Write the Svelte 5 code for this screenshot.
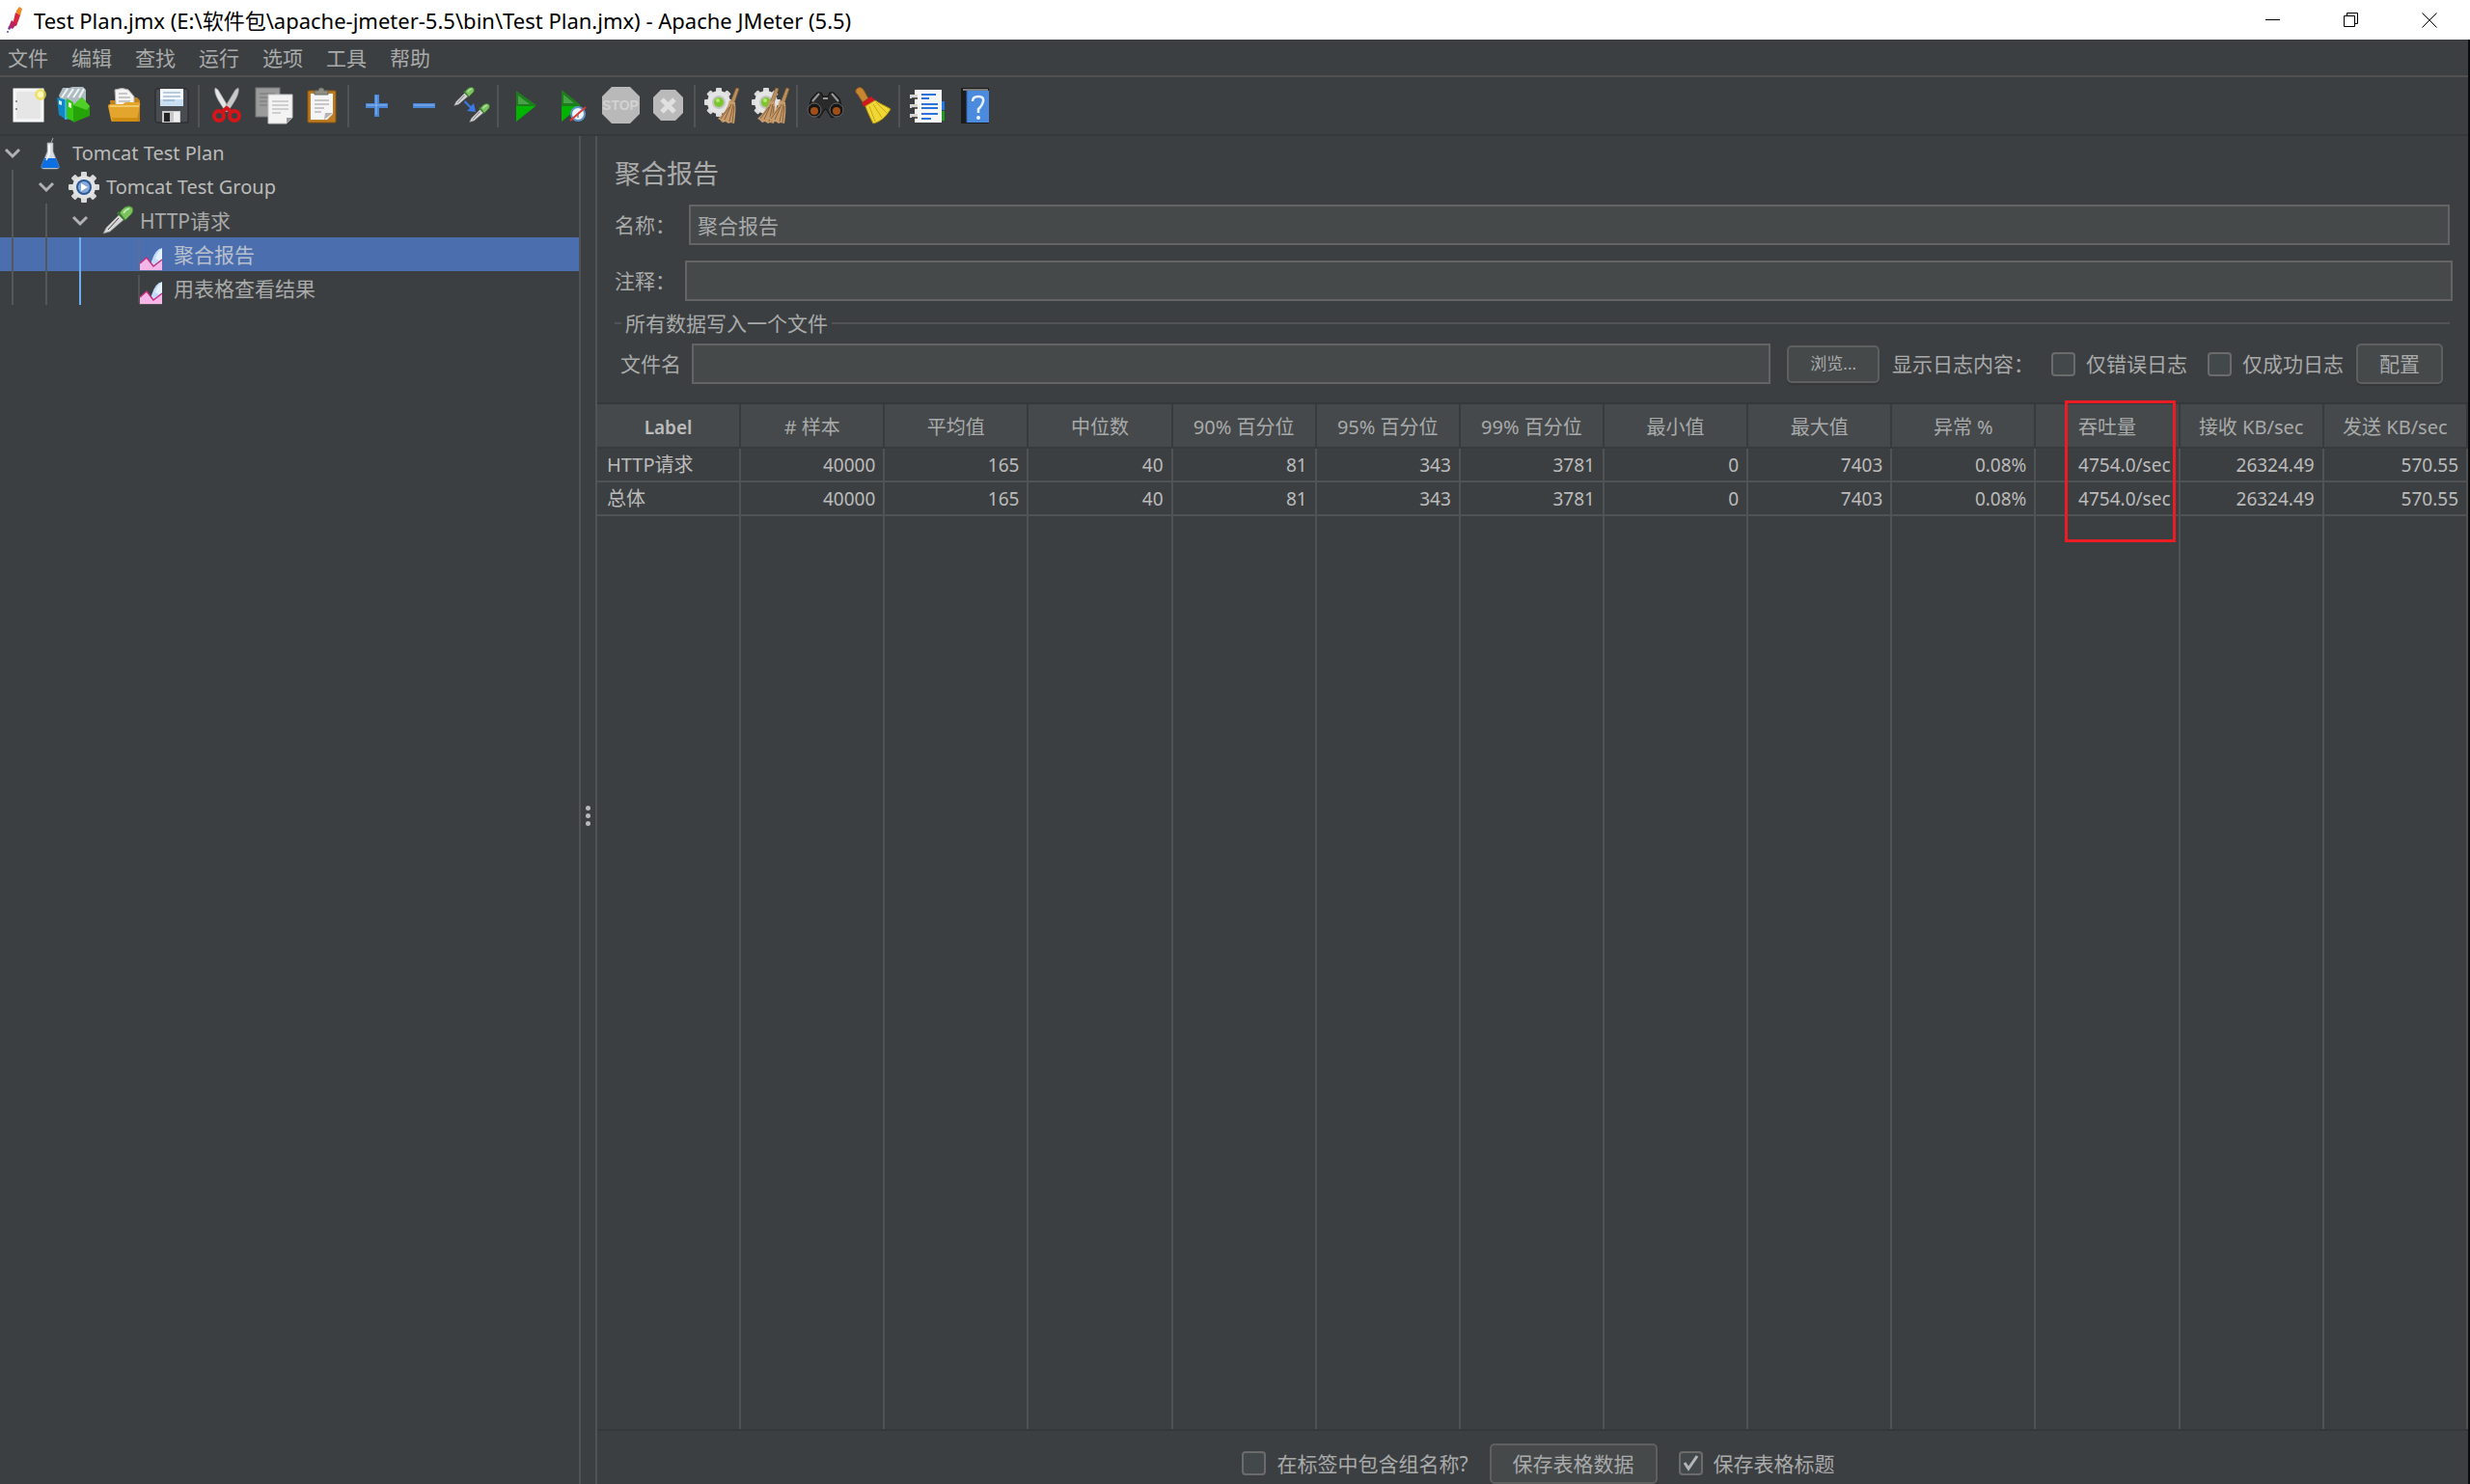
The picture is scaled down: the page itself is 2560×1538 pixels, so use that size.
<script lang="ts">
	type TreeNode = { label: string; level: number; icon: string; selected?: boolean };

	const menus = ['文件', '编辑', '查找', '运行', '选项', '工具', '帮助'];

	const toolGroups = [
		[
			{ icon: 'new', title: '新建' },
			{ icon: 'templates', title: '模板' },
			{ icon: 'open', title: '打开' },
			{ icon: 'save', title: '保存' },
		],
		[
			{ icon: 'cut', title: '剪切' },
			{ icon: 'copy', title: '复制' },
			{ icon: 'paste', title: '粘贴' },
		],
		[
			{ icon: 'plus', title: '全部展开' },
			{ icon: 'minus', title: '全部折叠' },
			{ icon: 'toggle', title: '切换' },
		],
		[
			{ icon: 'start', title: '启动' },
			{ icon: 'startNoTimers', title: '不停顿开始' },
			{ icon: 'stop', title: '停止' },
			{ icon: 'shutdown', title: '关闭' },
		],
		[
			{ icon: 'clear', title: '清除' },
			{ icon: 'clearAll', title: '清除全部' },
		],
		[
			{ icon: 'search', title: '查找' },
			{ icon: 'broom', title: '重置查找' },
		],
		[
			{ icon: 'functions', title: '函数助手' },
			{ icon: 'help', title: '帮助' },
		],
	];

	let nodes: TreeNode[] = $state([
		{ label: 'Tomcat Test Plan', level: 0, icon: 'flask' },
		{ label: 'Tomcat Test Group', level: 1, icon: 'gear' },
		{ label: 'HTTP请求', level: 2, icon: 'dropper' },
		{ label: '聚合报告', level: 3, icon: 'graph', selected: true },
		{ label: '用表格查看结果', level: 3, icon: 'graph' },
	]);

	const columns = [
		'Label', '# 样本', '平均值', '中位数', '90% 百分位', '95% 百分位', '99% 百分位',
		'最小值', '最大值', '异常 %', '吞吐量', '接收 KB/sec', '发送 KB/sec',
	];
	const markedColumn = '吞吐量';

	const stats = ['40000', '165', '40', '81', '343', '3781', '0', '7403', '0.08%', '4754.0/sec', '26324.49', '570.55'];
	const rows = [
		{ label: 'HTTP请求', values: stats },
		{ label: '总体', values: stats },
	];

	let name = $state('聚合报告');
	let comment = $state('');
	let filename = $state('');
	let errorsOnly = $state(false);
	let successOnly = $state(false);
	let includeGroup = $state(false);
	let saveHeader = $state(true);

	const teeth = [0, 45, 90, 135, 180, 225, 270, 315];

	function isLatin(text: string) {
		return /^[\x20-\x7e]+$/.test(text);
	}

	function select(index: number) {
		nodes.forEach((n, i) => (n.selected = i === index));
	}
</script>

{#snippet whisk(x: number)}
	<g transform="translate({x} 0)">
		<path d="M30 1l3 1-5 15-4-1z" fill="#b98d5c" stroke="#7a5730" stroke-width=".6" />
		<path d="M23 14l6 2c1 7 0 14-1 22l-4-1-2 1-3-2-3 1-3-3-2-1c6-5 10-11 12-19z" fill="#c69c6d" />
		<path d="M25 18l-7 16M27 18l-4 18M28 20l-2 17M23 21l-9 12" stroke="#8a6238" fill="none" />
	</g>
{/snippet}

{#snippet cog()}
	<g transform="translate(14 16)">
		{#each teeth as a}
			<rect x="-3" y="-15" width="6" height="8" rx="1" fill="#dcdcdc" transform="rotate({a})" />
		{/each}
		<circle r="12" fill="#e4e4e4" />
		<circle r="7" fill="#c4c4c4" />
		<circle r="5" fill="#7bc62d" />
		<circle cx="-1" cy="-2" r="2" fill="#b6ea72" />
	</g>
{/snippet}

{#snippet pipette(x: number, y: number, s: number)}
	<g transform="translate({x} {y}) scale({s})">
		<path d="M1 29l3-6L18 9l5 5L8 27z" fill="#d8d8d8" stroke="#888" stroke-width=".7" />
		<path d="M6 25L17 13" stroke="#444" stroke-width="1" />
		<path d="M15 8l8 8 2-2-8-8z" fill="#3d7a35" />
		<path d="M18 8c2-4 6-8 11-7 4 1 3 6 1 8l-6 6z" fill="#7cc35f" stroke="#3f7d35" />
		<path d="M22 8c1-2 3-4 6-5" stroke="#c8efb7" stroke-width="1.5" fill="none" />
	</g>
{/snippet}

{#snippet toolIcon(icon: string)}
	<svg class="tool-icon" viewBox="0 0 36 40" aria-hidden="true">
		{#if icon === 'new'}
			<rect x="1" y="2" width="31" height="34" fill="#f4f4f4" stroke="#fff" />
			<rect x="4" y="5" width="25" height="28" fill="#e6e6e6" />
			<circle cx="4" cy="15" r="1" fill="#777" /><circle cx="4" cy="23" r="1" fill="#777" />
			<circle cx="29" cy="8" r="6" fill="#f0df4e" opacity=".75" />
			<circle cx="29" cy="8" r="3" fill="#fffbc0" />
		{:else if icon === 'templates'}
			<path d="M-1 9l4-8h7l3-1h11l3 3v16H3z" fill="#aebbc1" />
			<path d="M2 11l6-9M8 11l6-9M14 11l6-9M20 11l5-9" stroke="#eef3f5" stroke-width="2" />
			<path d="M-3 11l8 2v20l-6-4z" fill="#1186c6" /><path d="M5 13l7 2v18l-7 1z" fill="#38b0e8" />
			<path d="M-1 14l3 1v4l-3-1z" fill="#d6f0fb" />
			<path d="M7 12l7 4v20l-7-4z" fill="#38c413" /><path d="M14 19l9-8 8 9v10l-17 7z" fill="#27a30a" />
			<path d="M9 16l3 1v5l-3-1z" fill="#e0ffd6" />
			<path d="M14 19l9-8 8 9-3 4z" fill="#4ed026" />
		{:else if icon === 'open'}
			<path d="M3 14h6l2-3h20l3 3v22H5z" fill="#c4831a" />
			<path d="M9 19L8 3q8-3 14 0l6 7v10z" fill="#f4f4f4" stroke="#aaa" />
			<path d="M12 7h9M12 11h12M12 15h12" stroke="#9b9b9b" />
			<path d="M1 20q0-2 2-2h13l3-2h13q3 0 2 3l-3 15q0 2-2 2H6q-2 0-2-2z" fill="#e3a52c" />
			<path d="M3 20h30" stroke="#f3c868" stroke-width="2" /><path d="M5 32h27l-1 4H6z" fill="#cf8d12" />
		{:else if icon === 'save'}
			<path d="M2 2h31l2 2v33H3l-2-2V4z" fill="#484b50" stroke="#23252a" />
			<rect x="6" y="2" width="24" height="18" fill="#f4f9ff" />
			<rect x="6" y="13" width="24" height="7" fill="#cbdff2" />
			<path d="M9 6h18M9 10h18M9 14h12" stroke="#7d9bb8" />
			<rect x="8" y="25" width="19" height="12" fill="#c8c8c8" /><rect x="10" y="27" width="6" height="9" fill="#222" />
			<rect x="20" y="26" width="6" height="10" fill="#eee" />
		{:else if icon === 'cut'}
			<path d="M6 1l3 2 12 20-4 3C12 18 4 8 6 1z" fill="#e5e5e5" stroke="#999" stroke-width=".7" />
			<path d="M30 1l-3 2-12 20 4 3C24 18 32 8 30 1z" fill="#c9c9c9" stroke="#999" stroke-width=".7" />
			<ellipse cx="10" cy="30" rx="5" ry="5" fill="none" stroke="#d4151a" stroke-width="4" />
			<ellipse cx="26" cy="30" rx="5" ry="5" fill="none" stroke="#d4151a" stroke-width="4" />
			<path d="M13 26l5-4 5 4" stroke="#d4151a" stroke-width="4" fill="none" />
		{:else if icon === 'copy'}
			<rect x="-1" y="1" width="25" height="30" fill="#9b9b9b" stroke="#777" />
			<path d="M3 7h16M3 11h16M3 15h8M3 19h8" stroke="#777" />
			<path d="M12 8h25v24l-6 6H12z" fill="#f3f3f3" stroke="#c4c4c4" />
			<path d="M16 15h17M16 19h17M16 23h17M16 27h9" stroke="#aaa" /><path d="M31 38v-6h6z" fill="#999" />
		{:else if icon === 'paste'}
			<rect x="4" y="4" width="29" height="33" rx="1" fill="#bd7c24" stroke="#8a5510" />
			<path d="M7 7h23v21l-6 6H7z" fill="#f5f5f5" />
			<path d="M11 14h15M11 18h15M11 22h10M11 26h7" stroke="#999" /><path d="M21 34l1-7 8 0z" fill="#b5b5b5" />
			<path d="M11 8V4h4q0-3 3-3t3 3h4v4z" fill="#8e8f85" stroke="#666" />
		{:else if icon === 'plus'}
			<path d="M16 8h5v9h9v5h-9v9h-5v-9H7v-5h9z" fill="#4a86d6" /><path d="M18 9v20M8 19h21" stroke="#8fb8ef" />
		{:else if icon === 'minus'}
			<rect x="7" y="17" width="23" height="5" fill="#4a86d6" /><path d="M8 19h21" stroke="#8fb8ef" />
		{:else if icon === 'toggle'}
			{@render pipette(0, 0, 0.67)}
			{@render pipette(16, 17, 0.67)}
			<path d="M12 14l6 6 3-3 2 9-9-1 3-3-6-6z" fill="#3c79e8" />
		{:else if icon === 'start'}
			<path d="M8 4l21 15L8 36z" fill="#1d7d1d" /><path d="M8 20h20L8 36z" fill="#00b400" />
			<path d="M10 9l12 9H10z" fill="#48a048" />
		{:else if icon === 'startNoTimers'}
			<path d="M6 3l20 16L6 36z" fill="#1d7d1d" /><path d="M6 20h19L6 36z" fill="#00b400" />
			<path d="M8 8l11 9H8z" fill="#48a048" />
			<circle cx="23" cy="28" r="7" fill="#edf4fb" stroke="#5f93c8" stroke-width="2" />
			<path d="M23 28l4-4M23 28v4" stroke="#456" /><path d="M15 35L31 21" stroke="#db3b34" stroke-width="2" />
		{:else if icon === 'stop'}
			<path d="M9 0h19l10 10v18L28 38H9L-1 28V10z" fill="#b9b9b9" />
			<text x="18" y="24" text-anchor="middle" class="stop-text">STOP</text>
		{:else if icon === 'shutdown'}
			<path d="M11 3h15l8 8v16l-8 8H11l-8-8V11z" fill="#bababa" />
			<path d="M12 13l13 13M25 13L12 26" stroke="#e0e0e0" stroke-width="5" />
		{:else if icon === 'clear'}
			{@render cog()}
			{@render whisk(2)}
		{:else if icon === 'clearAll'}
			{@render cog()}
			{@render whisk(-6)}
			{@render whisk(5)}
		{:else if icon === 'search'}
			<path d="M4 12l6-6h4l2 4h5l2-4h4l6 6 4 14-12 6-6-9h-1l-6 9L0 26z" fill="#2a2a2a" stroke="#111" />
			<path d="M5 15l7-8M32 15l-7-8M16 12h5" stroke="#999" stroke-width="2" />
			<circle cx="7" cy="24" r="7" fill="#161616" stroke="#666" /><circle cx="30" cy="24" r="7" fill="#161616" stroke="#666" />
			<circle cx="7" cy="25" r="4" fill="#a04f16" /><circle cx="30" cy="25" r="4" fill="#a04f16" />
		{:else if icon === 'broom'}
			<path d="M1 3q4-5 8 0l5 9-6 4-5-8q-3-2-2-5z" fill="#c98632" stroke="#8a5717" />
			<path d="M7 17l10-7 4 4-11 7z" fill="#d3191f" />
			<path d="M11 20l10-6c4 3 11 6 16 9-4 7-10 13-18 15-3-6-6-12-8-18z" fill="#f0d733" stroke="#b49512" />
			<path d="M15 20l6 16M19 18l9 14M22 16l11 11" stroke="#c8a81d" fill="none" />
		{:else if icon === 'functions'}
			<rect x="5" y="3" width="28" height="34" fill="#f6f6f6" />
			<rect x="33" y="15" width="3" height="9" fill="#2079e8" /><rect x="33" y="25" width="3" height="10" fill="#1f9a1f" />
			<path d="M12 8h15M12 12h8M12 18h17M12 22h17M12 28h17M12 33h10" stroke="#2b72dc" stroke-width="2" />
			<path d="M0 10h8M0 20h8M0 30h8" stroke="#d5d5d5" stroke-width="4" />
			<path d="M2 12h6M2 22h6M2 32h6" stroke="#333" stroke-width="1.5" />
		{:else if icon === 'help'}
			<rect x="4" y="1" width="29" height="37" rx="1" fill="#1c1c1c" /><path d="M6 3h26" stroke="#ddd" />
			<rect x="10" y="4" width="23" height="33" fill="#4a8be0" /><path d="M10 4v33" stroke="#2e63ab" />
			<path d="M16 15q0-5 6-5t5 5-5 8v4" fill="none" stroke="#e8f1fc" stroke-width="2.5" /><circle cx="22" cy="32" r="2" fill="#e8f1fc" />
		{/if}
	</svg>
{/snippet}

{#snippet treeIcon(icon: string)}
	<svg class="tree-icon" viewBox="0 0 34 34" aria-hidden="true">
		{#if icon === 'flask'}
			<path d="M18 6l2-5" stroke="#aaa" />
			<path d="M14 6h6v9l6 15q1 3-3 3H11q-4 0-3-3l6-15z" fill="#d7dde2" stroke="#8d959b" stroke-width=".7" />
			<path d="M11 22h12l3 8q1 2-2 2H10q-3 0-2-2z" fill="#0e6fe0" /><path d="M16 8v10l-3 6" stroke="#fff" fill="none" stroke-width="1.5" />
		{:else if icon === 'gear'}
			<g transform="translate(17 17)">
				{#each teeth as a}
					<rect x="-3" y="-16" width="6" height="8" rx="1" fill="#d9d9d9" transform="rotate({a})" />
				{/each}
				<circle r="12" fill="#e3e3e3" /><circle r="8" fill="#2c5a9c" /><circle r="6" fill="#86a9d8" />
				<path d="M-3-4l7 4-7 4z" fill="#fff" />
			</g>
		{:else if icon === 'dropper'}
			{@render pipette(1, 1, 1)}
		{:else if icon === 'graph'}
			<path d="M4 3v29M4 33h24" stroke="#777" stroke-width=".7" />
			<path d="M17 24q4-13 11-14v22H17z" fill="#c4dcfb" /><path d="M21 21q3-9 7-10v14z" fill="#e6f1ff" />
			<path d="M5 26l7-6 7 9 9-7v11H5z" fill="#f7b6e8" /><path d="M5 26l7-6 7 9 9-7" fill="none" stroke="#c2307f" stroke-width="1.5" />
		{/if}
	</svg>
{/snippet}

<div class="window">
	<header class="titlebar">
		<svg class="feather" viewBox="0 0 18 28" aria-hidden="true">
			<path d="M10 4l3-4 3 2-2 7-4 3z" fill="#f08a24" />
			<path d="M9 6l5 3-4 11-4-1z" fill="#d6273d" /><path d="M5 14l5 4-4 5-4-2z" fill="#b8235f" />
			<path d="M2 20l3 1-2 3-2-1z" fill="#7b3c96" /><circle cx="1" cy="26" r="1" fill="#6b4c96" />
		</svg>
		<span class="title">Test Plan.jmx (E:\软件包\apache-jmeter-5.5\bin\Test Plan.jmx) - Apache JMeter (5.5)</span>
		<div class="window-buttons">
			<button aria-label="最小化"><svg viewBox="0 0 16 16"><path d="M0 7.5h15" /></svg></button>
			<button aria-label="还原"><svg viewBox="0 0 16 16"><path d="M.5 3.5h11v11H.5zM3.5 3V.5h11v11H12" /></svg></button>
			<button aria-label="关闭"><svg viewBox="0 0 16 16"><path d="M.5.5l15 15M15.5.5l-15 15" /></svg></button>
		</div>
	</header>

	<div class="app">
		<nav class="menubar">
			{#each menus as menu}
				<button>{menu}</button>
			{/each}
		</nav>

		<div class="toolbar">
			{#each toolGroups as group, i}
				{#if i > 0}<span class="separator"></span>{/if}
				{#each group as tool}
					<button aria-label={tool.title}>{@render toolIcon(tool.icon)}</button>
				{/each}
			{/each}
		</div>

		<div class="body">
			<div class="tree" role="tree">
				{#each nodes as node, i}
					<button
						class="node"
						class:selected={node.selected}
						class:latin={isLatin(node.label)}
						role="treeitem"
						aria-selected={!!node.selected}
						onclick={() => select(i)}
					>
						{#each { length: node.level } as _, depth}
							<span class="guide" class:active={depth === 2}></span>
						{/each}
						<span class="chevron">
							{#if node.level < 3}
								<svg viewBox="0 0 18 12" aria-hidden="true"><path d="M2 2l7 7 7-7" /></svg>
							{/if}
						</span>
						{@render treeIcon(node.icon)}
						<span class="node-label">{node.label}</span>
					</button>
				{/each}
			</div>

			<div class="splitter"><i></i><i></i><i></i></div>

			<main class="panel">
				<div class="form">
					<h1>聚合报告</h1>
					<div class="field name">
						<label for="name">名称：</label>
						<input id="name" type="text" bind:value={name} />
					</div>
					<div class="field comment">
						<label for="comment">注释：</label>
						<input id="comment" type="text" bind:value={comment} />
					</div>

					<div class="group-title"><span>所有数据写入一个文件</span></div>
					<div class="file-row">
						<label for="filename">文件名</label>
						<input id="filename" type="text" bind:value={filename} />
						<button class="btn small">浏览...</button>
						<span class="log-label">显示日志内容：</span>
						<label class="check"><input type="checkbox" bind:checked={errorsOnly} />仅错误日志</label>
						<label class="check"><input type="checkbox" bind:checked={successOnly} />仅成功日志</label>
						<button class="btn">配置</button>
					</div>
				</div>

				<div class="table-wrap">
					<table>
						<thead>
							<tr>
								{#each columns as column}
									<th class:latin={isLatin(column)}>
										{column}
										{#if column === markedColumn}<span class="mark"></span>{/if}
									</th>
								{/each}
							</tr>
						</thead>
						<tbody>
							{#each rows as row}
								<tr>
									<td class="name-cell">{row.label}</td>
									{#each row.values as value}
										<td>{value}</td>
									{/each}
								</tr>
							{/each}
							<tr class="filler" aria-hidden="true">
								{#each columns as _}<td></td>{/each}
							</tr>
						</tbody>
					</table>
				</div>

				<footer class="bottom">
					<label class="check"><input type="checkbox" bind:checked={includeGroup} />在标签中包含组名称?</label>
					<button class="btn wide">保存表格数据</button>
					<label class="check"><input type="checkbox" bind:checked={saveHeader} />保存表格标题</label>
				</footer>
			</main>
		</div>
	</div>
</div>

<style>
	:global(body) {
		margin: 0;
		background: #3c3f41;
	}
	.window {
		display: flex;
		flex-direction: column;
		min-height: 100vh;
		font-family: 'Noto Sans', 'Noto Sans CJK SC', sans-serif;
		font-size: 21px;
		line-height: 26px;
		color: #a9aaaa;
	}
	.window * {
		box-sizing: border-box;
	}
	button, input {
		font: inherit;
		color: inherit;
		margin: 0;
		padding: 0;
		border: none;
		background: none;
	}

	/* title bar */
	.titlebar {
		display: flex;
		align-items: center;
		height: 41px;
		padding: 0 2px 0 7px;
		background: #fff;
		color: #000;
	}
	.feather {
		width: 18px;
		height: 28px;
		margin-right: 10px;
	}
	.title {
		font-size: 22px;
	}
	.window-buttons {
		display: flex;
		margin-left: auto;
	}
	.window-buttons button {
		width: 81px;
		height: 40px;
	}
	.window-buttons svg {
		width: 16px;
		height: 16px;
		fill: none;
		stroke: #000;
	}

	.app {
		flex: 1;
		display: flex;
		flex-direction: column;
		background: #3c3f41;
		border-right: 2px solid #0a0a0a;
	}
	.menubar {
		display: flex;
		gap: 24px;
		height: 39px;
		padding: 0 8px;
		border-bottom: 2px solid #515151;
	}

	/* toolbar */
	.toolbar {
		display: flex;
		align-items: center;
		height: 61px;
		padding-left: 6px;
		border-bottom: 2px solid #35383a;
	}
	.toolbar button {
		display: flex;
		align-items: center;
		justify-content: center;
		width: 49px;
		height: 44px;
	}
	.separator {
		width: 2px;
		height: 44px;
		margin: 0 3px;
		background: #515354;
	}
	.tool-icon {
		width: 36px;
		height: 40px;
		overflow: visible;
	}
	.stop-text {
		font: bold 14px 'Liberation Sans', sans-serif;
		fill: #d2d2d2;
	}

	.body {
		flex: 1;
		display: flex;
	}

	/* tree */
	.tree {
		flex: 0 0 600px;
	}
	.node {
		display: flex;
		align-items: center;
		width: 100%;
		height: 35px;
		text-align: left;
	}
	.node.latin {
		font-size: 20px;
		color: #bbbbbb;
	}
	.node.selected {
		background: #4b6eaf;
		color: #b8c0cd;
	}
	.guide {
		width: 35px;
		height: 35px;
		background: linear-gradient(#55585a, #55585a) 12px 0 / 2px 100% no-repeat;
	}
	.guide.active {
		background-image: linear-gradient(#6eaef0, #6eaef0);
	}
	.chevron {
		width: 35px;
		padding-left: 4px;
	}
	.chevron svg {
		display: block;
		width: 18px;
		height: 12px;
		fill: none;
		stroke: #afb1b3;
		stroke-width: 3;
	}
	.tree-icon {
		width: 34px;
		height: 34px;
		margin-right: 6px;
	}

	.splitter {
		display: flex;
		flex-direction: column;
		align-items: center;
		justify-content: center;
		gap: 3px;
		width: 19px;
		padding-top: 12px;
		border-left: 2px solid #515354;
		border-right: 2px solid #515354;
	}
	.splitter i {
		width: 5px;
		height: 5px;
		border-radius: 50%;
		background: #b8b9ba;
	}

	/* right panel */
	.panel {
		flex: 1;
		min-width: 0;
		display: flex;
		flex-direction: column;
	}
	.form {
		padding: 20px 16px 18px 18px;
	}
	h1 {
		margin: 0 0 13px;
		font-size: 27px;
		font-weight: 400;
		line-height: 38px;
	}
	.field {
		display: flex;
		align-items: center;
		margin-bottom: 16px;
	}
	.field.comment {
		margin-bottom: 10px;
	}
	.field label {
		width: 73px;
	}
	.field.name label {
		width: 77px;
	}
	.field.name {
		padding-right: 3px;
	}
	input[type='text'] {
		flex: 1;
		min-width: 0;
		height: 42px;
		padding: 0 7px;
		background: #45494a;
		border: 2px solid #646464;
	}
	.group-title {
		display: flex;
		align-items: center;
		gap: 4px;
		margin-right: 3px;
	}
	.group-title::before,
	.group-title::after {
		content: '';
		width: 7px;
		height: 2px;
		background: #515354;
	}
	.group-title::after {
		flex: 1;
	}
	.file-row {
		display: flex;
		align-items: center;
		padding: 8px 10px 1px 6px;
	}
	.file-row > label:first-child {
		width: 74px;
	}
	.btn {
		height: 42px;
		padding: 0 22px;
		background: #45494a;
		border: 2px solid #5e6060;
		border-radius: 5px;
		box-shadow: 0 2px 1px #35383a;
		white-space: nowrap;
	}
	.btn.small {
		height: 39px;
		margin: 0 13px 0 17px;
		font-size: 17px;
	}
	.check {
		display: flex;
		align-items: center;
		margin-right: 13px;
		white-space: nowrap;
	}
	.file-row .check + .check {
		margin-left: 8px;
	}
	.log-label {
		margin-right: 18px;
	}
	input[type='checkbox'] {
		appearance: none;
		width: 25px;
		height: 25px;
		margin-right: 11px;
		background: #43494a;
		border: 2px solid #6b6b6b;
		border-radius: 4px;
	}
	input[type='checkbox']:checked {
		background: #43494a url("data:image/svg+xml,%3Csvg xmlns='http://www.w3.org/2000/svg' viewBox='0 0 21 21'%3E%3Cpath d='M4 10l4 6 9-13' fill='none' stroke='%23b5b5b5' stroke-width='3'/%3E%3C/svg%3E") center / 100%;
	}

	/* table */
	.table-wrap {
		flex: 1;
		display: flex;
		border-top: 2px solid #35383a;
		border-bottom: 2px solid #35383a;
	}
	table {
		width: 100%;
		table-layout: fixed;
		border-collapse: separate;
		border-spacing: 0;
	}
	th {
		position: relative;
		height: 46px;
		padding: 4px 0 0;
		background: #45494b;
		border-right: 2px solid #383b3d;
		border-bottom: 2px solid #383b3d;
		font-size: 20px;
		font-weight: 400;
		white-space: nowrap;
	}
	th.latin {
		font-size: 19px;
		font-weight: 600;
		color: #bbbbbb;
	}
	td {
		height: 35px;
		padding: 1px 8px 0 10px;
		border-right: 2px solid #505354;
		border-bottom: 2px solid #505354;
		font-size: 19px;
		color: #bbbbbb;
		text-align: right;
	}
	.name-cell {
		font-size: 20px;
		text-align: left;
	}
	.filler td {
		height: auto;
		border-bottom: none;
	}
	.mark {
		position: absolute;
		top: -4px;
		left: 30px;
		right: 3px;
		height: 147px;
		border: 3px solid #ed1c24;
	}

	.bottom {
		display: flex;
		align-items: center;
		justify-content: center;
		height: 55px;
		padding: 12px 0 0 12px;
	}
	.bottom .check {
		margin: 0;
	}
	.btn.wide {
		margin: 0 22px;
	}
</style>
